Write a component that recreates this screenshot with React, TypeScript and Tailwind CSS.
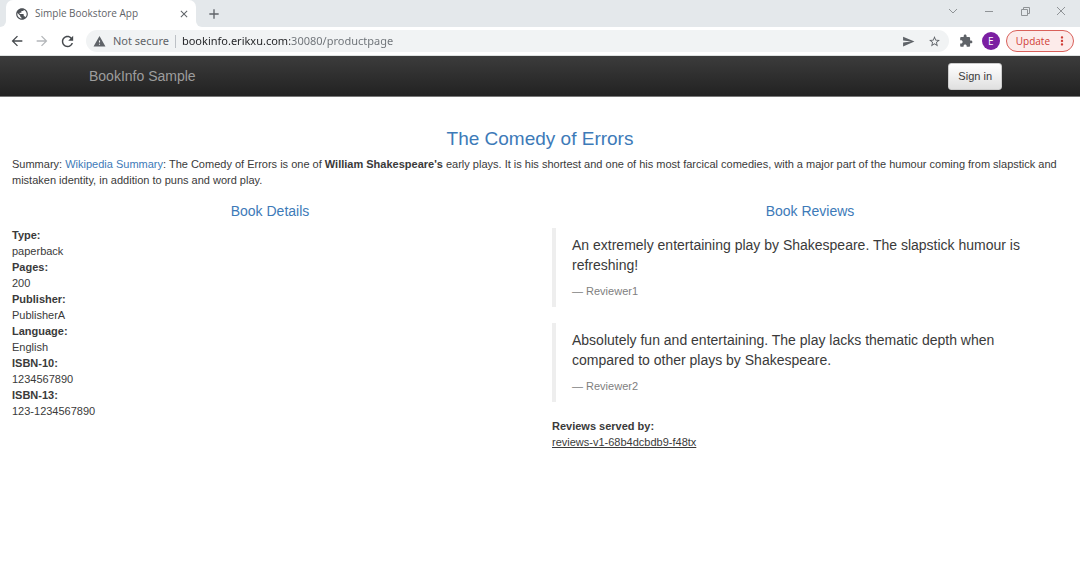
import { useState } from "react";

const bookDetails: { label: string; value: string }[] = [
  { label: "Type:", value: "paperback" },
  { label: "Pages:", value: "200" },
  { label: "Publisher:", value: "PublisherA" },
  { label: "Language:", value: "English" },
  { label: "ISBN-10:", value: "1234567890" },
  { label: "ISBN-13:", value: "123-1234567890" },
];

const reviews: { text: string; reviewer: string }[] = [
  {
    text: "An extremely entertaining play by Shakespeare. The slapstick humour is refreshing!",
    reviewer: "Reviewer1",
  },
  {
    text: "Absolutely fun and entertaining. The play lacks thematic depth when compared to other plays by Shakespeare.",
    reviewer: "Reviewer2",
  },
];

const Icon = ({ d, className }: { d: string; className: string }) => (
  <svg viewBox="0 0 24 24" fill="currentColor" className={className} aria-hidden="true">
    <path d={d} />
  </svg>
);

const icons = {
  globe:
    "M12 2C6.48 2 2 6.48 2 12s4.48 10 10 10 10-4.48 10-10S17.52 2 12 2zm-1 17.93c-3.95-.49-7-3.85-7-7.93 0-.62.08-1.21.21-1.79L9 15v1c0 1.1.9 2 2 2v1.93zm6.9-2.54c-.26-.81-1-1.39-1.9-1.39h-1v-3c0-.55-.45-1-1-1H8v-2h2c.55 0 1-.45 1-1V7h2c1.1 0 2-.9 2-2v-.41c2.93 1.19 5 4.06 5 7.41 0 2.08-.8 3.97-2.1 5.39z",
  close: "M19 6.41L17.59 5 12 10.59 6.41 5 5 6.41 10.59 12 5 17.59 6.41 19 12 13.41 17.59 19 19 17.59 13.41 12z",
  add: "M19 13h-6v6h-2v-6H5v-2h6V5h2v6h6v2z",
  back: "M20 11H7.83l5.59-5.59L12 4l-8 8 8 8 1.41-1.41L7.83 13H20v-2z",
  forward: "M12 4l-1.41 1.41L16.17 11H4v2h12.17l-5.58 5.59L12 20l8-8z",
  reload:
    "M17.65 6.35C16.2 4.9 14.21 4 12 4c-4.42 0-7.99 3.58-7.99 8s3.57 8 7.99 8c3.73 0 6.84-2.55 7.73-6h-2.08c-.82 2.33-3.04 4-5.65 4-3.31 0-6-2.69-6-6s2.69-6 6-6c1.66 0 3.14.69 4.22 1.78L13 11h7V4l-2.35 2.35z",
  warning: "M1 21h22L12 2 1 21zm12-3h-2v-2h2v2zm0-4h-2v-4h2v4z",
  send: "M2.01 21L23 12 2.01 3 2 10l15 2-15 2z",
  star: "M22 9.24l-7.19-.62L12 2 9.19 8.63 2 9.24l5.46 4.73L5.82 21 12 17.27 18.18 21l-1.63-7.03L22 9.24zM12 15.4l-3.76 2.27 1-4.28-3.32-2.88 4.38-.38L12 6.1l1.71 4.04 4.38.38-3.32 2.88 1 4.28L12 15.4z",
  puzzle:
    "M20.5 11H19V7c0-1.1-.9-2-2-2h-4V3.5C13 2.12 11.88 1 10.5 1S8 2.12 8 3.5V5H4c-1.1 0-1.99.9-1.99 2v3.8H3.5c1.49 0 2.7 1.21 2.7 2.7s-1.21 2.7-2.7 2.7H2V20c0 1.1.9 2 2 2h3.8v-1.5c0-1.49 1.21-2.7 2.7-2.7 1.49 0 2.7 1.21 2.7 2.7V22H17c1.1 0 2-.9 2-2v-4h1.5c1.38 0 2.5-1.12 2.5-2.5S21.88 11 20.5 11z",
  more: "M12 8c1.1 0 2-.9 2-2s-.9-2-2-2-2 .9-2 2 .9 2 2 2zm0 2c-1.1 0-2 .9-2 2s.9 2 2 2 2-.9 2-2-.9-2-2-2zm0 6c-1.1 0-2 .9-2 2s.9 2 2 2 2-.9 2-2-.9-2-2-2z",
};

const windowControls: { name: string; d: string }[] = [
  { name: "Search tabs", d: "M2 4l4 4 4-4" },
  { name: "Minimize", d: "M2 6.5h8" },
  { name: "Restore", d: "M2.5 4.5h6v6h-6zM4.5 4.5v-2h6v6h-2" },
  { name: "Close window", d: "M2 2l8 8M10 2l-8 8" },
];

const TabStrip = () => (
  <div className="flex h-[27px] items-stretch bg-[#e4e8eb] text-[#5f6368]">
    <div className="flex w-[6px] bg-white">
      <div className="grow rounded-br-[6px] bg-[#e4e8eb]" />
    </div>
    <div className="flex w-[190px] items-center rounded-t-[7px] bg-white pl-[9px] pr-[6px]">
      <Icon d={icons.globe} className="size-[14px] text-[#4d5156]" />
      <span className="ml-[6px] grow truncate text-[10px]">Simple Bookstore App</span>
      <button aria-label="Close tab">
        <Icon d={icons.close} className="size-3" />
      </button>
    </div>
    <div className="flex w-[6px] bg-white">
      <div className="grow rounded-bl-[6px] bg-[#e4e8eb]" />
    </div>
    <button aria-label="New tab" className="ml-1">
      <Icon d={icons.add} className="size-4" />
    </button>
    <div className="ml-auto flex pb-[5px] pr-px">
      {windowControls.map((control) => (
        <button
          key={control.name}
          aria-label={control.name}
          className="flex w-9 items-center justify-center text-[#8f9396]"
        >
          <svg viewBox="0 0 12 12" fill="none" stroke="currentColor" className="size-3" aria-hidden="true">
            <path d={control.d} />
          </svg>
        </button>
      ))}
    </div>
  </div>
);

const Toolbar = () => {
  const [url, setUrl] = useState<string>("bookinfo.erikxu.com:30080/productpage");

  return (
    <div className="flex h-[29px] items-center border-b border-[#dfe3e2] bg-white pl-[9px] pr-[6px] text-[#5f6368]">
      <button aria-label="Back">
        <Icon d={icons.back} className="size-4 text-[#45494d]" />
      </button>
      <button aria-label="Forward" className="ml-[9px]">
        <Icon d={icons.forward} className="size-4 text-[#b4b7ba]" />
      </button>
      <button aria-label="Reload" className="ml-[9px]">
        <Icon d={icons.reload} className="size-[17px] text-[#45494d]" />
      </button>

      <div className="ml-[10px] flex h-[22px] grow items-center rounded-full bg-[#f1f3f4] pl-[7px] pr-2 font-['Noto_Sans','Open_Sans',sans-serif]">
        <Icon d={icons.warning} className="size-[13px]" />
        <span className="ml-[7px] whitespace-nowrap text-[11px]">Not secure</span>
        <span className="ml-[6px] h-[13px] w-px bg-[#bdc1c6]" />
        {/* host is darker than the port and path */}
        <input
          type="text"
          aria-label="Address"
          value={url}
          onChange={(e) => setUrl(e.target.value)}
          className="ml-[6px] min-w-0 grow bg-[linear-gradient(90deg,#202124_108px,#6b7075_108px)] bg-clip-text text-[11px] text-transparent caret-black outline-none"
        />
        <button aria-label="Share">
          <Icon d={icons.send} className="size-[13px]" />
        </button>
        <button aria-label="Bookmark" className="ml-[13px]">
          <Icon d={icons.star} className="size-[13px]" />
        </button>
      </div>

      <button aria-label="Extensions" className="ml-[10px]">
        <Icon d={icons.puzzle} className="size-[14px]" />
      </button>
      <button
        aria-label="Profile"
        className="ml-[9px] size-[18px] rounded-full bg-[#7b1fa2] text-[10px] leading-[18px] text-white"
      >
        E
      </button>
      <button className="ml-[6px] flex h-[22px] items-center rounded-full border border-[#d9605a] bg-[#fcebea] pl-[9px] pr-1 text-[10px] text-[#d03c35]">
        Update
        <Icon d={icons.more} className="ml-[5px] size-[14px]" />
      </button>
    </div>
  );
};

const App = () => {
  return (
    <div className="min-h-screen bg-white">
      <header className="font-['Open_Sans','Noto_Sans',sans-serif]">
        <TabStrip />
        <Toolbar />
      </header>

      <div className="font-['Liberation_Sans',Arial,sans-serif] text-[11px] leading-4 text-[#3a3a3a]">
        <nav className="border-b border-[#777] bg-linear-to-b from-[#3c3c3c] to-[#222]">
          <div className="mx-auto flex h-10 max-w-[924px] items-center justify-between">
            <a href="#" className="ml-[11px] text-[14px] text-[#9d9d9d]">
              BookInfo Sample
            </a>
            <button className="h-[27px] rounded-[3px] border border-[#ccc] bg-linear-to-b from-white to-[#e0e0e0] px-[9px]">
              Sign in
            </button>
          </div>
        </nav>

        <main className="px-3 pt-[31px]">
          <h3 className="mb-[6px] text-center text-[19px] leading-[22px] text-[#3d7ab8]">The Comedy of Errors</h3>
          <p className="mb-[15px]">
            Summary:{" "}
            <a href="#" className="text-[#3d7ab8]">
              Wikipedia Summary
            </a>
            : The Comedy of Errors is one of <b>William Shakespeare's</b> early plays. It is his shortest and one of his
            most farcical comedies, with a major part of the humour coming from slapstick and mistaken identity, in
            addition to puns and word play.
          </p>

          <div className="grid grid-cols-2 gap-6">
            <section>
              <h4 className="mb-[7px] text-center text-[14px] leading-[17px] text-[#3d7ab8]">Book Details</h4>
              <dl>
                {bookDetails.map((detail) => (
                  <div key={detail.label}>
                    <dt className="font-bold">{detail.label}</dt>
                    <dd>{detail.value}</dd>
                  </div>
                ))}
              </dl>
            </section>

            <section>
              <h4 className="mb-2 text-center text-[14px] leading-[17px] text-[#3d7ab8]">Book Reviews</h4>
              {reviews.map((review) => (
                <blockquote
                  key={review.reviewer}
                  className="mb-4 border-l-4 border-[#eee] px-4 pb-2 pt-[7px] text-[14px] leading-5"
                >
                  <p className="mb-2">{review.text}</p>
                  <footer className="text-[11px] leading-4 text-[#808080]">— {review.reviewer}</footer>
                </blockquote>
              ))}
              <dl>
                <dt className="font-bold">Reviews served by:</dt>
                <dd>
                  <u>reviews-v1-68b4dcbdb9-f48tx</u>
                </dd>
              </dl>
            </section>
          </div>
        </main>
      </div>
    </div>
  );
};

export default App;
